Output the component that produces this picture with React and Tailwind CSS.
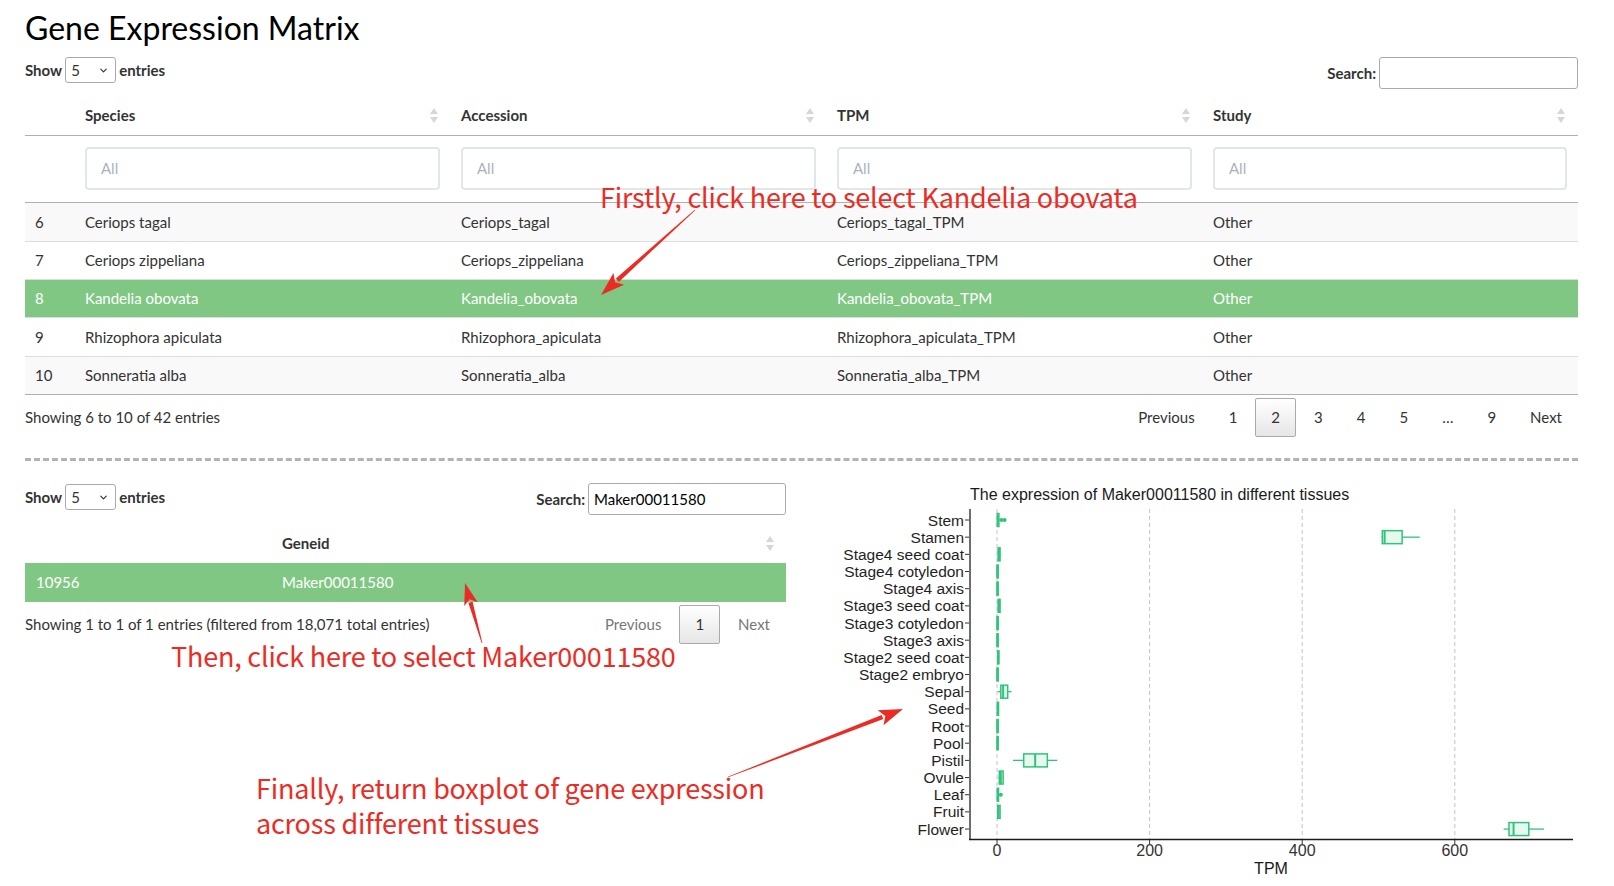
import { ChevronDown } from "lucide-react";

const GREEN = "bg-[#81c784]";

const rows = [
  { n: 6, sp: "Ceriops tagal", acc: "Ceriops_tagal", tpm: "Ceriops_tagal_TPM", bg: "bg-[#f9f9f9]", h: "h-[38px]" },
  { n: 7, sp: "Ceriops zippeliana", acc: "Ceriops_zippeliana", tpm: "Ceriops_zippeliana_TPM", bg: "bg-white", h: "h-[38px]" },
  { n: 8, sp: "Kandelia obovata", acc: "Kandelia_obovata", tpm: "Kandelia_obovata_TPM", bg: GREEN, sel: true, h: "h-[38px]" },
  { n: 9, sp: "Rhizophora apiculata", acc: "Rhizophora_apiculata", tpm: "Rhizophora_apiculata_TPM", bg: "bg-white", h: "h-[39px]" },
  { n: 10, sp: "Sonneratia alba", acc: "Sonneratia_alba", tpm: "Sonneratia_alba_TPM", bg: "bg-[#f9f9f9]", h: "h-[38px]" },
];

// [lo whisker, q1, median, q3, hi whisker], outliers
const tissues = [
  ["Stem", [0, 0.5, 1, 2.5, 4], [6, 10]],
  ["Stamen", [504, 505, 508, 531, 554]],
  ["Stage4 seed coat", [1, 1.5, 2.5, 4, 5]],
  ["Stage4 cotyledon", [0, 0.2, 0.5, 1, 1.5]],
  ["Stage4 axis", [0, 0.2, 0.5, 1, 1.5]],
  ["Stage3 seed coat", [1, 1.5, 2.5, 4, 5]],
  ["Stage3 cotyledon", [0, 0.2, 0.5, 1, 1.5]],
  ["Stage3 axis", [0, 0.2, 0.5, 1, 1.5]],
  ["Stage2 seed coat", [0.5, 1, 1.5, 2.5, 3]],
  ["Stage2 embryo", [0, 0.2, 0.5, 1, 1.5]],
  ["Sepal", [1, 5, 8, 14, 19]],
  ["Seed", [0, 0.5, 1, 2, 2.5]],
  ["Root", [0, 0.2, 0.5, 1, 1.5]],
  ["Pool", [0, 0.2, 0.5, 1, 1.5]],
  ["Pistil", [21, 35, 50, 66, 79]],
  ["Ovule", [2, 3, 5, 8, 9]],
  ["Leaf", [0, 0.5, 1, 2, 3], [5]],
  ["Fruit", [0, 1, 2, 4, 5]],
  ["Flower", [664, 671, 677, 697, 717]],
];

function SortIcon() {
  return (
    <svg width="8" height="15" viewBox="0 0 8 15">
      <path d="M4 0 L8 6 H0 Z" fill="#d6d6d6" />
      <path d="M4 15 L8 9 H0 Z" fill="#d6d6d6" />
    </svg>
  );
}

function SelectBox() {
  return (
    <div className="mx-[3px] flex h-[26px] w-[51px] items-center justify-between rounded-[3px] border border-[#aaa] pl-[5px] pr-[6px] text-[15px] font-normal">
      <span>5</span>
      <ChevronDown size={11} strokeWidth={2.5} />
    </div>
  );
}

function PageBtn({ children, current, muted }) {
  return (
    <div
      className={`ml-[2px] flex h-[39px] items-center justify-center rounded-[2px] px-[15px] ${
        current ? "border border-[#aaa] bg-gradient-to-b from-white to-[#e6e6e6]" : "border border-transparent"
      } ${muted ? "text-[#777]" : "text-[#333]"}`}
    >
      {children}
    </div>
  );
}

function arrowPoints(x1, y1, x2, y2, hl, hw, t0, t1) {
  const dx = x2 - x1;
  const dy = y2 - y1;
  const len = Math.hypot(dx, dy);
  const ux = dx / len;
  const uy = dy / len;
  const nx = -uy;
  const ny = ux;
  const bx = x2 - ux * hl;
  const by = y2 - uy * hl;
  const shaft = [
    [x1 + nx * t0, y1 + ny * t0],
    [bx + nx * t1, by + ny * t1],
    [bx - nx * t1, by - ny * t1],
    [x1 - nx * t0, y1 - ny * t0],
  ];
  const head = [
    [x2, y2],
    [bx + nx * hw - ux * 2, by + ny * hw - uy * 2],
    [bx + ux * 3, by + uy * 3],
    [bx - nx * hw - ux * 2, by - ny * hw - uy * 2],
  ];
  const f = (p) => p.map((q) => q.join(",")).join(" ");
  return { shaft: f(shaft), head: f(head) };
}

function Arrow({ x1, y1, x2, y2, hl = 22, hw = 8 }) {
  const a = arrowPoints(x1, y1, x2, y2, hl, hw, 0.4, 2.2);
  return (
    <g fill="#ec2c24">
      <polygon points={a.shaft} />
      <polygon points={a.head} />
    </g>
  );
}

function BoxPlot() {
  const X = (v) => 997 + v * 0.763;
  const Y = (i) => 520 + i * 17.17;
  const grid = [0, 200, 400, 600];
  return (
    <svg width="790" height="405" viewBox="800 475 790 405" className="block" style={{ fontFamily: "'Liberation Sans', Arial, sans-serif" }}>
      <text x="970" y="499.5" fontSize="16" fill="#1a1a1a">
        The expression of Maker00011580 in different tissues
      </text>
      {grid.map((g) => (
        <line key={g} x1={X(g)} x2={X(g)} y1="509" y2="839" stroke="#c4c4c4" strokeWidth="1" strokeDasharray="4 3" />
      ))}
      {tissues.map(([name, s, out], i) => {
        const y = Y(i);
        return (
          <g key={name}>
            <line x1="965" x2="970" y1={y} y2={y} stroke="#333" strokeWidth="1" />
            <text x="964" y={y + 5.5} fontSize="15.5" textAnchor="end" fill="#1f1f1f">
              {name}
            </text>
            <line x1={X(s[0])} x2={X(s[1])} y1={y} y2={y} stroke="#2fc47a" strokeWidth="1.3" />
            <line x1={X(s[3])} x2={X(s[4])} y1={y} y2={y} stroke="#2fc47a" strokeWidth="1.3" />
            <rect
              x={X(s[1])}
              y={y - 6.5}
              width={Math.max(X(s[3]) - X(s[1]), 1)}
              height="13"
              fill="#2fc47a"
              fillOpacity="0.12"
              stroke="#2fc47a"
              strokeWidth="1.5"
            />
            <line x1={X(s[2])} x2={X(s[2])} y1={y - 6.5} y2={y + 6.5} stroke="#2fc47a" strokeWidth="2" />
            {(out || []).map((o) => (
              <circle key={o} cx={X(o)} cy={y} r="2" fill="#2fc47a" />
            ))}
          </g>
        );
      })}
      <line x1="970" x2="970" y1="509" y2="840" stroke="#6e6e6e" strokeWidth="2" />
      <line x1="969" x2="1573" y1="839.5" y2="839.5" stroke="#1a1a1a" strokeWidth="1.5" />
      {grid.map((g) => (
        <g key={g}>
          <line x1={X(g)} x2={X(g)} y1="840" y2="844" stroke="#333" strokeWidth="1" />
          <text x={X(g)} y="855.5" fontSize="16" textAnchor="middle" fill="#333">
            {g}
          </text>
        </g>
      ))}
      <text x="1271" y="874" fontSize="16" textAnchor="middle" fill="#1a1a1a">
        TPM
      </text>
    </svg>
  );
}

export default function App() {
  const cols = "grid grid-cols-[50px_376px_376px_376px_375px]";
  const red = "whitespace-nowrap text-[#ec2c24] font-['Noto_Sans_CJK_SC',sans-serif] text-[27px] leading-[35px] tracking-[-0.2px]";

  return (
    <div className="relative h-[886px] w-[1614px] overflow-hidden bg-white font-['Lato',sans-serif] text-[15px] text-[#333]">
      <div className="pl-[25px] pr-[36px]">
        <h1 className="pt-[10px] text-[32px] leading-[36px] font-normal text-black">Gene Expression Matrix</h1>

        <div className="mt-[4px] flex items-start justify-between">
          <div className="mt-[7px] flex items-center font-bold">
            <span>Show</span>
            <SelectBox />
            <span>entries</span>
          </div>
          <div className="mt-[7px] flex items-center font-bold">
            <span className="mr-[3px]">Search:</span>
            <div className="h-[32px] w-[199px] rounded-[3px] border border-[#aaa]" />
          </div>
        </div>

        {/* main table */}
        <div className="mt-[7px]">
          <div className={`${cols} h-[40px] border-b border-[#b0b0b0] font-bold`}>
            <div />
            {["Species", "Accession", "TPM", "Study"].map((h) => (
              <div key={h} className="flex items-center justify-between pl-[10px] pr-[13px]">
                <span>{h}</span>
                <SortIcon />
              </div>
            ))}
          </div>
          <div className={`${cols} h-[67px] border-b border-[#b0b0b0]`}>
            <div />
            {[0, 1, 2, 3].map((i) => (
              <div key={i} className="pl-[10px] pr-[11px] pt-[11px]">
                <div className="flex h-[43px] items-center rounded-[4px] border-2 border-[#e0e6ea] pl-[14px] text-[#aab2ba]">
                  All
                </div>
              </div>
            ))}
          </div>
          {rows.map((r, i) => (
            <div
              key={r.n}
              className={`${cols} ${r.h} items-center ${i > 0 ? "border-t border-[#ddd]" : ""} ${r.bg} ${
                r.sel ? "text-white" : ""
              }`}
            >
              <div className="pl-[10px]">{r.n}</div>
              <div className="pl-[10px]">{r.sp}</div>
              <div className="pl-[10px]">{r.acc}</div>
              <div className="pl-[10px]">{r.tpm}</div>
              <div className="pl-[10px]">Other</div>
            </div>
          ))}
          <div className="border-t border-[#b0b0b0]" />
        </div>

        <div className="flex h-[45px] items-center justify-between">
          <div>Showing 6 to 10 of 42 entries</div>
          <div className="flex items-center">
            <PageBtn>Previous</PageBtn>
            <PageBtn>1</PageBtn>
            <PageBtn current>2</PageBtn>
            <PageBtn>3</PageBtn>
            <PageBtn>4</PageBtn>
            <PageBtn>5</PageBtn>
            <PageBtn>…</PageBtn>
            <PageBtn>9</PageBtn>
            <PageBtn>Next</PageBtn>
          </div>
        </div>

        <div className="mt-[18px] border-t-[3px] border-dashed border-[#b3b3b3]" />

        <div className="flex items-start">
          {/* gene table */}
          <div className="w-[761px]">
            <div className="mt-[22px] flex items-start justify-between">
              <div className="mt-[1px] flex items-center font-bold">
                <span>Show</span>
                <SelectBox />
                <span>entries</span>
              </div>
              <div className="flex items-center font-bold">
                <span className="mr-[3px]">Search:</span>
                <div className="flex h-[32px] w-[198px] items-center rounded-[3px] border border-[#aaa] pl-[5px] font-normal text-black">
                  Maker00011580
                </div>
              </div>
            </div>
            <div className="mt-[8px] grid h-[40px] grid-cols-[246px_515px] font-bold">
              <div />
              <div className="flex items-center justify-between pl-[11px] pr-[12px]">
                <span>Geneid</span>
                <SortIcon />
              </div>
            </div>
            <div className={`grid h-[39px] grid-cols-[246px_515px] items-center ${GREEN} text-white`}>
              <div className="pl-[11px]">10956</div>
              <div className="pl-[11px]">Maker00011580</div>
            </div>
            <div className="flex h-[45px] items-center justify-between">
              <div>Showing 1 to 1 of 1 entries (filtered from 18,071 total entries)</div>
              <div className="flex items-center">
                <PageBtn muted>Previous</PageBtn>
                <PageBtn current>1</PageBtn>
                <PageBtn muted>Next</PageBtn>
              </div>
            </div>
            <p className={`${red} -mt-[9px] pl-[146px]`}>Then, click here to select Maker00011580</p>
            <p className={`${red} mt-[97px] pl-[231px]`}>
              Finally, return boxplot of gene expression
              <br />
              across different tissues
            </p>
          </div>

          <div className="ml-[14px] mt-[14px]">
            <BoxPlot />
          </div>
        </div>
      </div>

      {/* annotation overlay */}
      <p className={`${red} absolute left-[600px] top-[179px]`}>Firstly, click here to select Kandelia obovata</p>
      <svg className="pointer-events-none absolute left-0 top-0" width="1614" height="886">
        <Arrow x1={695} y1={210} x2={601} y2={295} />
        <Arrow x1={482} y1={643} x2={465} y2={583} hl={20} hw={7} />
        <Arrow x1={728} y1={777} x2={903} y2={709} />
      </svg>
    </div>
  );
}
